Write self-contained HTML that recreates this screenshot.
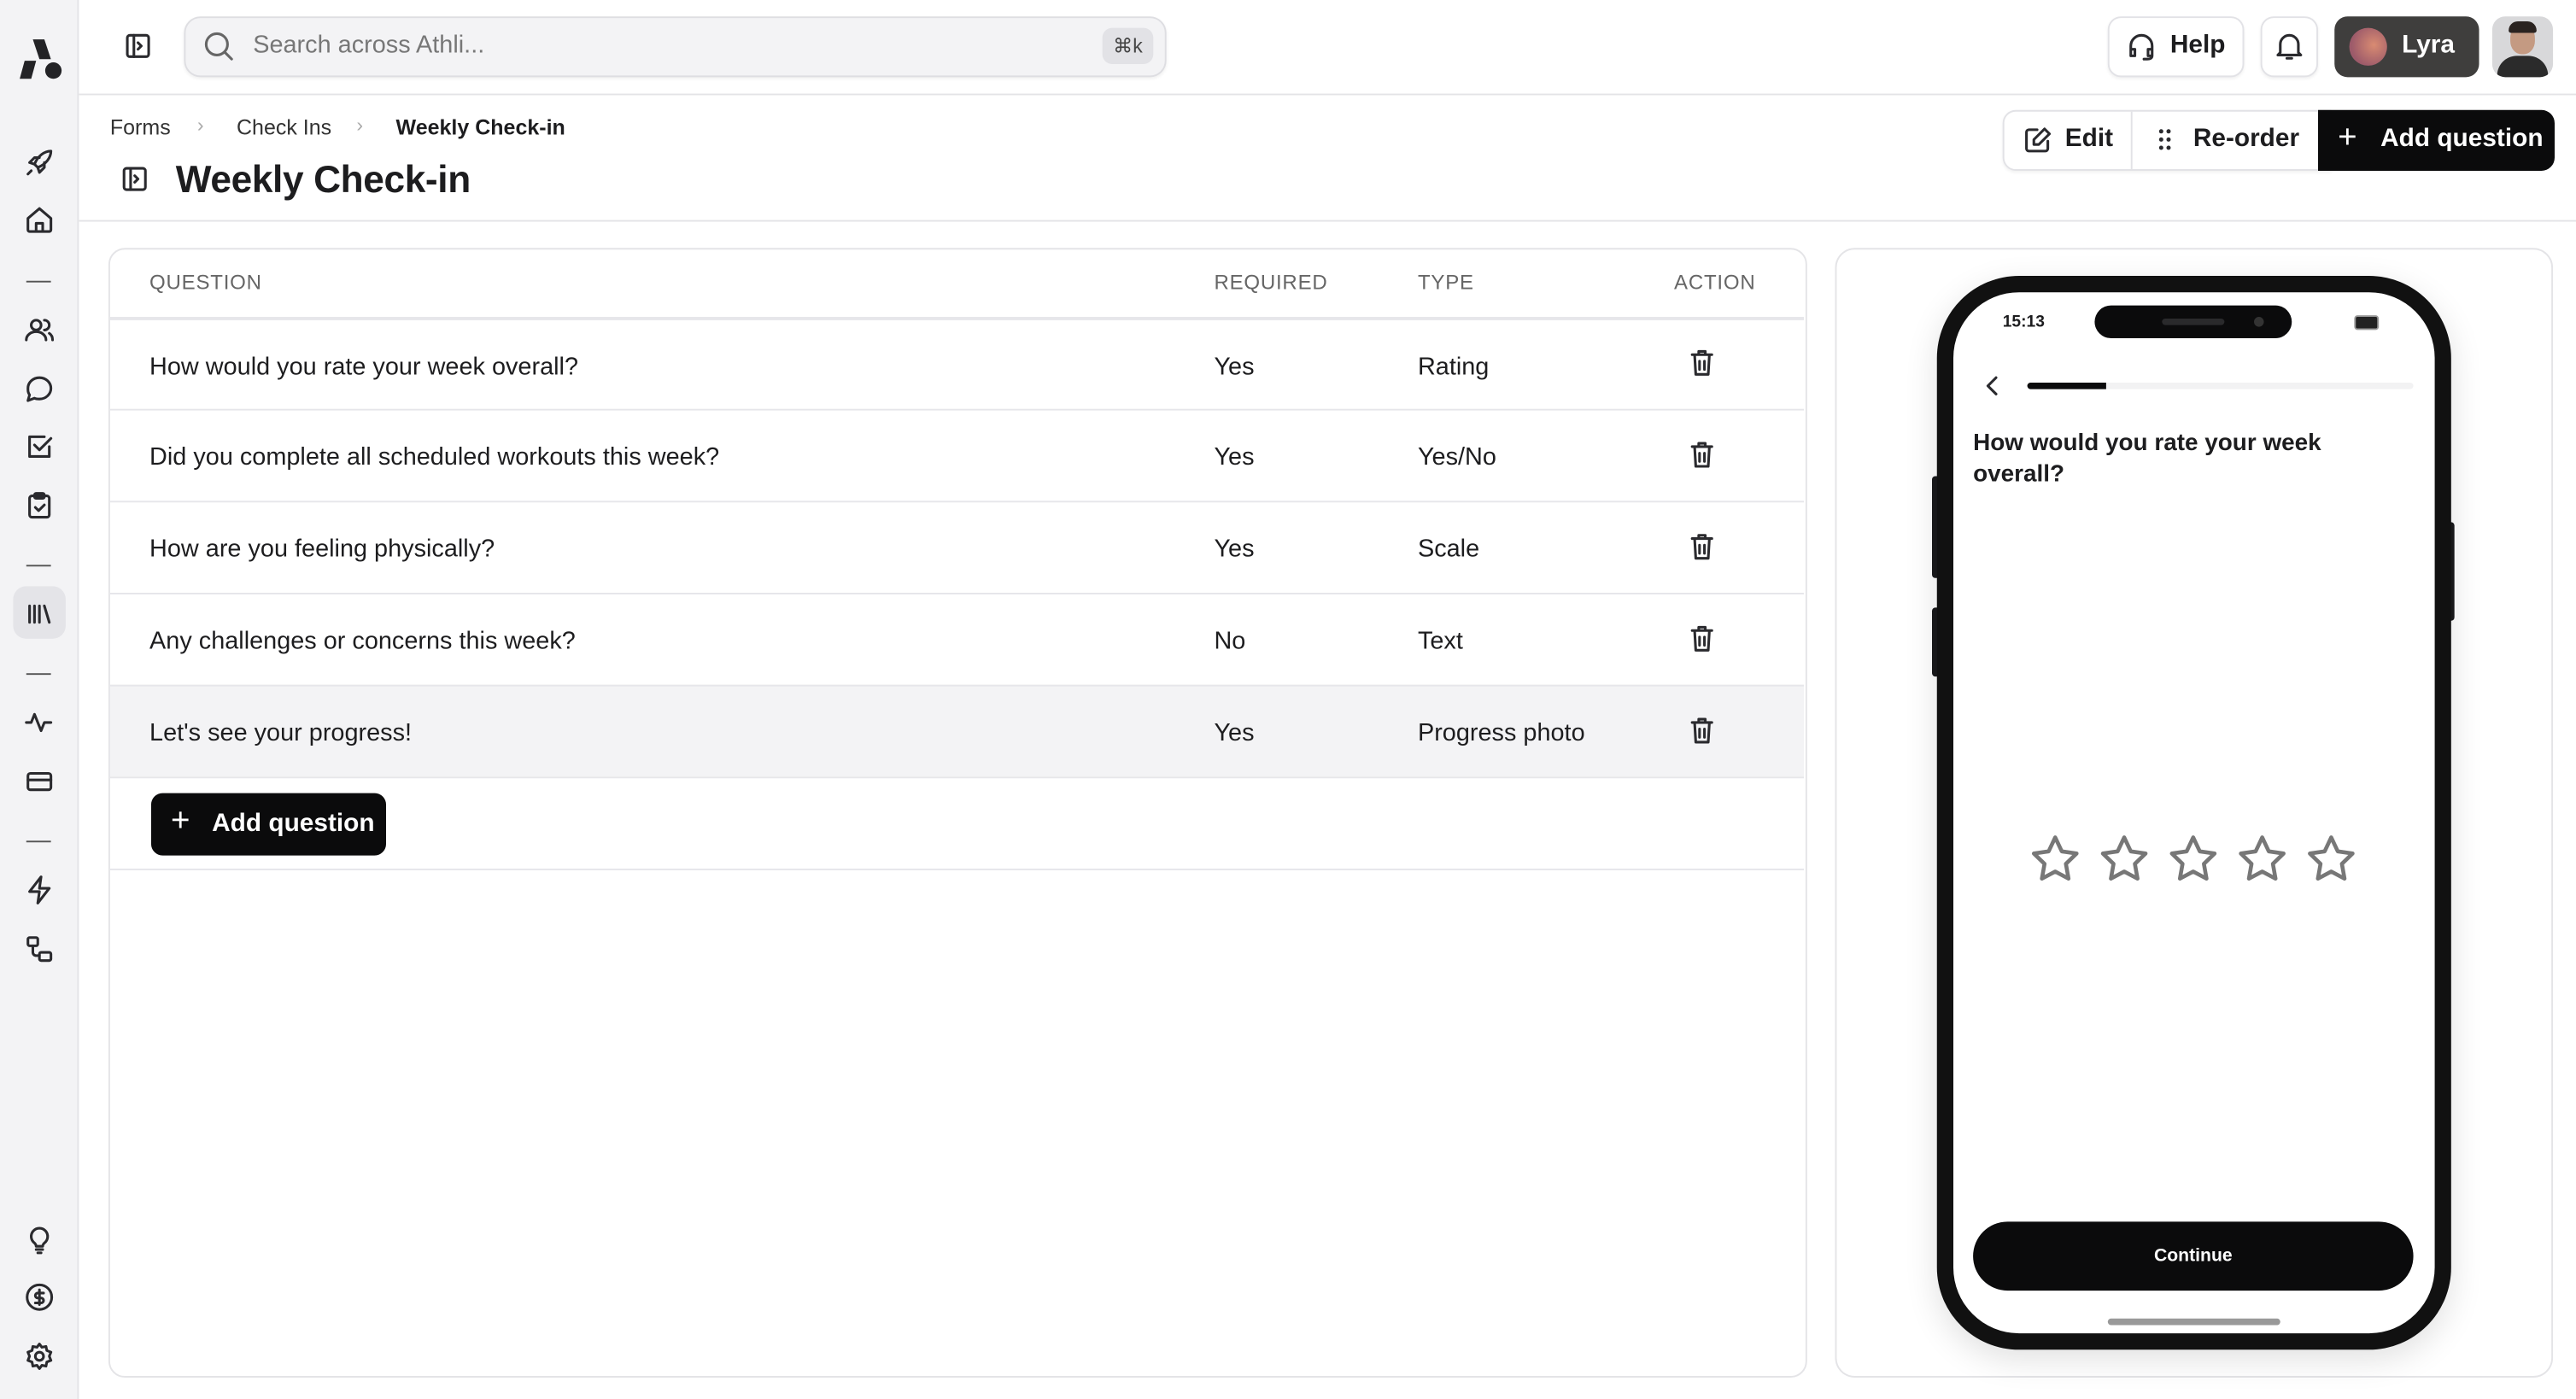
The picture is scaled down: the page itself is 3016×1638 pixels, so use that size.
<!DOCTYPE html>
<html><head><meta charset="utf-8">
<style>
*{box-sizing:border-box;margin:0;padding:0}
html,body{width:3016px;height:1638px;overflow:hidden;background:#fff}
#w{position:absolute;left:0;top:0;width:1568px;height:852px;transform:scale(1.92347,1.9225);transform-origin:0 0;font-family:"Liberation Sans",sans-serif;color:#1d1d1f}
.a{position:absolute}
.ic{position:absolute;fill:none;stroke:#2a2a2e;stroke-width:1.6;stroke-linecap:round;stroke-linejoin:round}
.sb{left:0;top:0;width:48px;height:852px;background:#f3f3f5;border-right:1px solid #e4e4e7}
.dash{position:absolute;left:16px;width:15px;height:1px;background:#555}
.btn{position:absolute;border:1px solid #e2e2e6;border-radius:8px;background:#fff;box-shadow:0 1px 2px rgba(0,0,0,.06)}
.t{position:absolute;white-space:nowrap}
.row{position:absolute;left:67px;width:1031px;height:56px;border-top:1px solid #e6e6ea;font-size:15px}
.row span{position:absolute;top:20px}
</style></head><body><div id="w">
<div class="a sb"></div>
<svg class="a" style="left:10px;top:22px" width="30" height="28" viewBox="0 0 30 28"><path d="M10 2h7l4 12h-7z" fill="#232326"/><path d="M5 15h7l-3 11H2z" fill="#232326"/><circle cx="22.5" cy="21" r="5" fill="#232326"/></svg>
<!-- sidebar icons -->
<svg class="ic" style="left:15px;top:90px" width="18" height="18" viewBox="0 0 18 18"><path d="M4 14c-1 1-2 2-2 2s1-1 2-2M6 10l-3-1 3-3h3M8 12l1 3 3-3V9M6 10l2 2c5-2 8-6 8-10-4 0-8 3-10 8z"/></svg>
<svg class="ic" style="left:15px;top:125px" width="18" height="18" viewBox="0 0 18 18"><path d="M2 8l7-6 7 6v7a1 1 0 0 1-1 1H3a1 1 0 0 1-1-1z M7 16v-5h4v5"/></svg>
<div class="dash" style="top:171px"></div>
<svg class="ic" style="left:15px;top:192px" width="18" height="18" viewBox="0 0 18 18"><circle cx="7" cy="6" r="3"/><path d="M1 15c0-3 3-5 6-5s6 2 6 5M12 3a3 3 0 0 1 0 6M15 11c1.5 1 2 2.5 2 4"/></svg>
<svg class="ic" style="left:15px;top:228px" width="18" height="18" viewBox="0 0 18 18"><path d="M9 2c4 0 7 3 7 6.5S13 15 9 15c-1 0-2 0-3-.5L2 16l1-3.5C2 11 2 10 2 8.5 2 5 5 2 9 2z"/></svg>
<svg class="ic" style="left:15px;top:263px" width="18" height="18" viewBox="0 0 18 18"><path d="M15 9v6H3V3h9M6 8l3 3 7-7"/></svg>
<svg class="ic" style="left:15px;top:299px" width="18" height="18" viewBox="0 0 18 18"><rect x="3" y="3" width="12" height="13" rx="1.5"/><rect x="6" y="1.5" width="6" height="3" rx="1"/><path d="M6.5 10l2 2 3.5-3.5"/></svg>
<div class="dash" style="top:344px"></div>
<div class="a" style="left:8px;top:357px;width:32px;height:32px;border-radius:8px;background:#e4e4e8"></div>
<svg class="ic" style="left:15px;top:365px" width="18" height="18" viewBox="0 0 18 18"><path d="M3 4v10M6 4v10M9 4v10M12 4l3 10"/></svg>
<div class="dash" style="top:410px"></div>
<svg class="ic" style="left:15px;top:431px" width="18" height="18" viewBox="0 0 18 18"><path d="M1 9h3l2-5 4 10 2-5h4"/></svg>
<svg class="ic" style="left:15px;top:467px" width="18" height="18" viewBox="0 0 18 18"><rect x="2" y="4" width="14" height="10" rx="1.5"/><path d="M2 8h14"/></svg>
<div class="dash" style="top:512px"></div>
<svg class="ic" style="left:15px;top:533px" width="18" height="18" viewBox="0 0 18 18"><path d="M10 1L3 10h6l-1 7 7-9H9z"/></svg>
<svg class="ic" style="left:15px;top:569px" width="18" height="18" viewBox="0 0 18 18"><rect x="2" y="2" width="6" height="5" rx="1"/><rect x="9" y="11" width="7" height="5" rx="1"/><path d="M5 7v4a2 2 0 0 0 2 2h2"/></svg>
<svg class="ic" style="left:15px;top:746px" width="18" height="18" viewBox="0 0 18 18"><path d="M6 11a5 5 0 1 1 6 0c-1 1-1 2-1 2H7s0-1-1-2zM7 15h4M8 17h2"/></svg>
<svg class="ic" style="left:15px;top:781px" width="18" height="18" viewBox="0 0 18 18"><circle cx="9" cy="9" r="7.5"/><path d="M11.5 6.5H8a1.5 1.5 0 0 0 0 3h2a1.5 1.5 0 0 1 0 3H6.5M9 4.5v9"/></svg>
<svg class="ic" style="left:15px;top:817px" width="18" height="18" viewBox="0 0 18 18"><circle cx="9" cy="9" r="2.5"/><path d="M9 1.5l1.5 2 2.5-.5.5 2.5 2.5 1-1 2.5 1 2.5-2.5 1-.5 2.5-2.5-.5L9 16.5l-1.5-2-2.5.5-.5-2.5-2.5-1 1-2.5-1-2.5 2.5-1 .5-2.5 2.5.5z"/></svg>
<!-- top bar -->
<div class="a" style="left:48px;top:57px;width:1520px;height:1px;background:#e4e4e7"></div>
<svg class="ic" style="left:76px;top:20px" width="16" height="16" viewBox="0 0 16 16"><rect x="1.5" y="1.5" width="13" height="13" rx="1.5"/><path d="M5.5 1.5v13M8 6l2 2-2 2"/></svg>
<div class="a" style="left:112px;top:10px;width:598px;height:37px;border:1px solid #dedee2;border-radius:10px;background:#f3f3f5;box-shadow:0 1px 2px rgba(0,0,0,.06)"></div>
<svg class="ic" style="left:123px;top:18px;stroke:#666" width="20" height="20" viewBox="0 0 20 20"><circle cx="9" cy="9" r="6.5"/><path d="M14 14l4 4"/></svg>
<div class="t" style="left:154px;top:19px;font-size:15px;color:#777">Search across Athli...</div>
<div class="a" style="left:671px;top:17px;width:31px;height:22px;border-radius:6px;background:#e2e2e6;font-size:12px;color:#444;text-align:center;line-height:22px">⌘k</div>
<div class="btn" style="left:1283px;top:10px;width:83px;height:37px"></div>
<svg class="ic" style="left:1295px;top:20px" width="17" height="17" viewBox="0 0 17 17"><path d="M2 11V8a6.5 6.5 0 0 1 13 0v3M2 10h2.5v4H2zM12.5 10H15v4h-2.5zM15 14c0 1.5-1.5 2-3 2h-2"/></svg>
<div class="t" style="left:1321px;top:19px;font-size:15.5px;font-weight:600">Help</div>
<div class="btn" style="left:1376px;top:10px;width:35px;height:37px"></div>
<svg class="ic" style="left:1385px;top:19px" width="17" height="18" viewBox="0 0 17 18"><path d="M3 13V8a5.5 5.5 0 0 1 11 0v5l1.5 1.5h-14zM7 16.5h3"/></svg>
<div class="a" style="left:1421px;top:10px;width:88px;height:37px;border-radius:8px;background:#3f3e3d"></div>
<div class="a" style="left:1430px;top:17px;width:23px;height:23px;border-radius:50%;background:radial-gradient(circle at 65% 45%,#d98b72,#9c5a6a 70%)"></div>
<div class="t" style="left:1462px;top:19px;font-size:15.5px;font-weight:600;color:#fff">Lyra</div>
<div class="a" style="left:1517px;top:10px;width:37px;height:37px;border-radius:8px;background:#d8d8da;overflow:hidden"><div class="a" style="left:11px;top:5px;width:15px;height:18px;border-radius:45%;background:#c49a82"></div><div class="a" style="left:10px;top:3px;width:17px;height:7px;border-radius:8px 8px 2px 2px;background:#2a2320"></div><div class="a" style="left:3px;top:24px;width:31px;height:20px;border-radius:12px 12px 0 0;background:#2b2b2b"></div></div>
<!-- header -->
<div class="t" style="left:67px;top:70px;font-size:13px;color:#333">Forms</div>
<div class="t" style="left:120px;top:69px;font-size:12px;color:#aaa">›</div>
<div class="t" style="left:144px;top:70px;font-size:13px;color:#333">Check Ins</div>
<div class="t" style="left:217px;top:69px;font-size:12px;color:#aaa">›</div>
<div class="t" style="left:241px;top:70px;font-size:13px;font-weight:600;color:#1d1d1f">Weekly Check-in</div>
<svg class="ic" style="left:74px;top:101px" width="16" height="16" viewBox="0 0 16 16"><rect x="1.5" y="1.5" width="13" height="13" rx="1.5"/><path d="M5.5 1.5v13M8 6l2 2-2 2"/></svg>
<div class="t" style="left:107px;top:96px;font-size:23px;font-weight:600;letter-spacing:-.2px">Weekly Check-in</div>
<div class="btn" style="left:1219px;top:67px;width:200px;height:37px;border-radius:8px 0 0 8px"></div>
<div class="a" style="left:1297px;top:68px;width:1px;height:35px;background:#e2e2e6"></div>
<svg class="ic" style="left:1232px;top:77px" width="17" height="17" viewBox="0 0 17 17"><path d="M8 2H3a1.5 1.5 0 0 0-1.5 1.5v10A1.5 1.5 0 0 0 3 15h10a1.5 1.5 0 0 0 1.5-1.5V9M12.5 1.5l3 3L9 11H6V8z"/></svg>
<div class="t" style="left:1257px;top:76px;font-size:15.5px;font-weight:600">Edit</div>
<svg style="position:absolute;left:1313px;top:78px" width="10" height="14" viewBox="0 0 10 14"><g fill="#2a2a2e"><circle cx="2.5" cy="2" r="1.3"/><circle cx="7" cy="2" r="1.3"/><circle cx="2.5" cy="7" r="1.3"/><circle cx="7" cy="7" r="1.3"/><circle cx="2.5" cy="12" r="1.3"/><circle cx="7" cy="12" r="1.3"/></g></svg>
<div class="t" style="left:1335px;top:76px;font-size:15.5px;font-weight:600">Re-order</div>
<div class="a" style="left:1411px;top:67px;width:144px;height:37px;border-radius:0 8px 8px 0;background:#0b0b0c"></div>
<div class="t" style="left:1423px;top:73px;font-size:20px;color:#fff;font-weight:300">+</div>
<div class="t" style="left:1449px;top:76px;font-size:15.5px;font-weight:600;color:#fff">Add question</div>
<div class="a" style="left:48px;top:134px;width:1520px;height:1px;background:#e4e4e7"></div>
<!-- table card -->
<div class="a" style="left:66px;top:151px;width:1034px;height:688px;border:1px solid #e4e4e7;border-radius:10px"></div>
<div class="t" style="left:91px;top:165px;font-size:12.5px;color:#666;letter-spacing:.4px">QUESTION</div>
<div class="t" style="left:739px;top:165px;font-size:12.5px;color:#666;letter-spacing:.4px">REQUIRED</div>
<div class="t" style="left:863px;top:165px;font-size:12.5px;color:#666;letter-spacing:.4px">TYPE</div>
<div class="t" style="left:1019px;top:165px;font-size:12.5px;color:#666;letter-spacing:.4px">ACTION</div>
<div class="row" style="top:193px;border-top:2px solid #e6e6ea"><span style="left:24px">How would you rate your week overall?</span><span style="left:672px">Yes</span><span style="left:796px">Rating</span></div>
<div class="row" style="top:249px"><span style="left:24px">Did you complete all scheduled workouts this week?</span><span style="left:672px">Yes</span><span style="left:796px">Yes/No</span></div>
<div class="row" style="top:305px"><span style="left:24px">How are you feeling physically?</span><span style="left:672px">Yes</span><span style="left:796px">Scale</span></div>
<div class="row" style="top:361px"><span style="left:24px">Any challenges or concerns this week?</span><span style="left:672px">No</span><span style="left:796px">Text</span></div>
<div class="row" style="top:417px;background:#f3f3f5"><span style="left:24px">Let's see your progress!</span><span style="left:672px">Yes</span><span style="left:796px">Progress photo</span></div>
<div class="a" style="left:67px;top:473px;width:1031px;height:1px;background:#e6e6ea"></div>
<div class="a" style="left:67px;top:529px;width:1031px;height:1px;background:#e6e6ea"></div>
<svg class="ic" style="left:1028px;top:212px" width="16" height="18" viewBox="0 0 16 18"><path d="M2 4h12M6 4V2h4v2M3.5 4l.7 12h7.6l.7-12M6.5 8v5M9.5 8v5"/></svg>
<svg class="ic" style="left:1028px;top:268px" width="16" height="18" viewBox="0 0 16 18"><path d="M2 4h12M6 4V2h4v2M3.5 4l.7 12h7.6l.7-12M6.5 8v5M9.5 8v5"/></svg>
<svg class="ic" style="left:1028px;top:324px" width="16" height="18" viewBox="0 0 16 18"><path d="M2 4h12M6 4V2h4v2M3.5 4l.7 12h7.6l.7-12M6.5 8v5M9.5 8v5"/></svg>
<svg class="ic" style="left:1028px;top:380px" width="16" height="18" viewBox="0 0 16 18"><path d="M2 4h12M6 4V2h4v2M3.5 4l.7 12h7.6l.7-12M6.5 8v5M9.5 8v5"/></svg>
<svg class="ic" style="left:1028px;top:436px" width="16" height="18" viewBox="0 0 16 18"><path d="M2 4h12M6 4V2h4v2M3.5 4l.7 12h7.6l.7-12M6.5 8v5M9.5 8v5"/></svg>
<div class="a" style="left:92px;top:483px;width:143px;height:38px;border-radius:7px;background:#0b0b0c"></div>
<div class="t" style="left:104px;top:489px;font-size:20px;color:#fff;font-weight:300">+</div>
<div class="t" style="left:129px;top:493px;font-size:15.5px;font-weight:600;color:#fff">Add question</div>
<!-- phone card -->
<div class="a" style="left:1117px;top:151px;width:437px;height:688px;border:1px solid #e4e4e7;border-radius:12px"></div>
<div class="a" style="left:1176px;top:290px;width:5px;height:30px;border-radius:2px;background:#1a1a1c"></div>
<div class="a" style="left:1176px;top:310px;width:5px;height:42px;border-radius:2px;background:#1a1a1c"></div>
<div class="a" style="left:1176px;top:370px;width:5px;height:42px;border-radius:2px;background:#1a1a1c"></div>
<div class="a" style="left:1489px;top:318px;width:5px;height:60px;border-radius:2px;background:#1a1a1c"></div>
<div class="a" style="left:1179px;top:168px;width:313px;height:654px;border-radius:50px;background:#111;box-shadow:0 6px 20px rgba(0,0,0,.12)"></div>
<div class="a" style="left:1189px;top:178px;width:293px;height:634px;border-radius:40px;background:#fff"></div>
<div class="t" style="left:1219px;top:191px;font-size:10px;font-weight:600">15:13</div>
<div class="a" style="left:1275px;top:186px;width:120px;height:20px;border-radius:10px;background:#0b0b0c"></div>
<div class="a" style="left:1316px;top:194px;width:38px;height:4px;border-radius:2px;background:#2a2a2c"></div>
<div class="a" style="left:1372px;top:193px;width:6px;height:6px;border-radius:50%;background:#333"></div>
<div class="a" style="left:1433px;top:192px;width:15px;height:9px;border-radius:2px;background:#222;border:1px solid #999"></div>
<svg class="ic" style="left:1208px;top:229px" width="10" height="12" viewBox="0 0 10 12"><path d="M7 1L2 6l5 5"/></svg>
<div class="a" style="left:1234px;top:233px;width:235px;height:4px;border-radius:2px;background:#f2f2f3"></div>
<div class="a" style="left:1234px;top:233px;width:48px;height:4px;border-radius:2px 0 0 2px;background:#0b0b0c"></div>
<div class="a" style="left:1201px;top:261px;width:250px;font-size:14.5px;font-weight:700;line-height:19px">How would you rate your week overall?</div>
<svg class="a" style="left:1233px;top:506px" width="206" height="36" viewBox="0 0 206 36"><g fill="none" stroke="#777" stroke-width="2.4" stroke-linejoin="round">
<path id="s" d="M18 4l4 8.5 9 1.3-6.5 6.3 1.6 9-8.1-4.3-8.1 4.3 1.6-9-6.5-6.3 9-1.3z"/>
<use href="#s" x="42"/><use href="#s" x="84"/><use href="#s" x="126"/><use href="#s" x="168"/></g></svg>
<div class="a" style="left:1201px;top:744px;width:268px;height:42px;border-radius:21px;background:#0b0b0c;color:#fff;font-size:11px;font-weight:700;text-align:center;line-height:42px">Continue</div>
<div class="a" style="left:1283px;top:803px;width:105px;height:4px;border-radius:2px;background:#999"></div>
</div></body></html>
